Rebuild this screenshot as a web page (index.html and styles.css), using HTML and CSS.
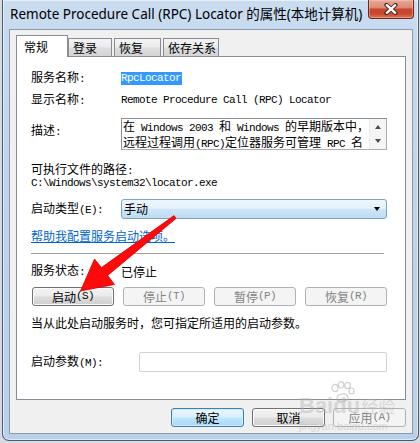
FILE: index.html
```html
<!DOCTYPE html>
<html lang="zh-CN">
<head>
<meta charset="utf-8">
<title>Remote Procedure Call (RPC) Locator 的属性(本地计算机)</title>
<link rel="stylesheet" href="styles.css">
</head>
<body>
<div class="window">
  <div class="titlebar">
    <span class="title">Remote Procedure Call (RPC) Locator 的属性(本地计算机)</span>
    <div class="close">
      <svg width="14" height="12" viewBox="0 0 14 12">
        <path d="M2.5 2 L11.5 10 M11.5 2 L2.5 10" stroke="#4a2620" stroke-width="4.2" stroke-linecap="round"/>
        <path d="M2.8 2.2 L11.2 9.8 M11.2 2.2 L2.8 9.8" stroke="#ffffff" stroke-width="2.4" stroke-linecap="round"/>
      </svg>
    </div>
  </div>
  <div class="client">
    <div class="tabs">
      <div class="tab active">常规</div>
      <div class="tab t2">登录</div>
      <div class="tab t3">恢复</div>
      <div class="tab t4">依存关系</div>
    </div>
    <div class="panel">
      <div class="row row-name">
        <span class="label">服务名称<span class="m">:</span></span>
        <span class="m selected">RpcLocator</span>
      </div>
      <div class="row row-display">
        <span class="label">显示名称<span class="m">:</span></span>
        <span class="m">Remote Procedure Call (RPC) Locator</span>
      </div>
      <div class="row row-desc">
        <span class="label label-desc">描述<span class="m">:</span></span>
        <div class="textarea">
          <div class="ta-text">在<span class="m"> Windows 2003 </span>和<span class="m"> Windows </span>的早期版本中，<br>远程过程调用<span class="m">(RPC)</span>定位器服务可管理<span class="m"> RPC </span>名</div>
          <div class="scrollbar">
            <span class="sb-up"></span>
            <span class="sb-down"></span>
          </div>
        </div>
      </div>
      <div class="line exe-label">可执行文件的路径<span class="m">:</span></div>
      <div class="line exe-path m">C:\Windows\system32\locator.exe</div>
      <div class="row row-type">
        <span class="label">启动类型<span class="m">(E):</span></span>
        <div class="combo">
          <span class="combo-text">手动</span>
          <span class="combo-arrow"></span>
        </div>
      </div>
      <div class="line link-line"><span class="link">帮助我配置服务启动选项。</span></div>
      <div class="separator"></div>
      <div class="row row-status">
        <span class="label">服务状态<span class="m">:</span></span>
        <span>已停止</span>
      </div>
      <div class="svc-buttons">
        <div class="btn">启动<span class="m">(S)</span></div>
        <div class="btn disabled">停止<span class="m">(T)</span></div>
        <div class="btn disabled">暂停<span class="m">(P)</span></div>
        <div class="btn disabled">恢复<span class="m">(R)</span></div>
      </div>
      <div class="line note">当从此处启动服务时，您可指定所适用的启动参数。</div>
      <div class="row row-params">
        <span class="label label-params">启动参数<span class="m">(M):</span></span>
        <div class="input"></div>
      </div>
    </div>
    <div class="footer">
      <div class="btn wide default">确定</div>
      <div class="btn wide">取消</div>
      <div class="btn wide disabled">应用<span class="m">(A)</span></div>
    </div>
  </div>
</div>

<svg class="arrow" width="420" height="443" viewBox="0 0 420 443">
  <polygon points="176,218.4 107.7,275.4 114.5,284.5 80.5,291 94.5,259 101.5,267.6 174,215.6" fill="#ff0a0a" stroke="#d80000" stroke-width="0.8" stroke-linejoin="round"/>
</svg>

<div class="watermark">
  <div class="wm-logo"><span class="wm-bai">Bai</span><span class="wm-paw">
    <svg width="26" height="22" viewBox="0 0 26 22">
      <g fill="none" stroke="rgba(170,170,170,0.55)" stroke-width="1.2">
        <ellipse cx="6" cy="7" rx="3" ry="3.6"/>
        <ellipse cx="12" cy="3.8" rx="2.8" ry="3.2"/>
        <ellipse cx="18.5" cy="4.5" rx="2.8" ry="3.2"/>
        <ellipse cx="22.5" cy="10" rx="2.6" ry="3"/>
        <path d="M8 18 C8 12 18 11 19 17 C19.5 21 9 21.5 8 18 Z"/>
      </g>
    </svg></span><span class="wm-du">du</span><span class="wm-jy">经验</span></div>
  <div class="wm-url">jingyan.baidu.com</div>
</div>
</body>
</html>
```
FILE: styles.css
```css
* {
  box-sizing: border-box;
}

html,
body {
  margin: 0;
  padding: 0;
}

body {
  width: 420px;
  height: 443px;
  overflow: hidden;
  position: relative;
  background: #d5dbe2;
  font-family: "Noto Sans CJK SC", sans-serif;
  font-size: 12px;
  color: #000;
}

.m {
  font-family: "Liberation Mono", "Noto Sans CJK SC", monospace;
  font-size: 11px;
  letter-spacing: -0.6px;
}

/* window frame */
.window {
  margin-left: 2px;
  width: 417px;
  height: 441px;
  border: 1px solid #4b5b6e;
  border-top: none;
  border-radius: 0 0 7px 7px;
  background: linear-gradient(180deg, #c9dcf0 0%, #bed4ec 40%, #b9d0ea 100%);
  box-shadow: inset 0 0 0 1px rgba(255, 255, 255, 0.55);
}

.titlebar {
  display: flex;
  align-items: flex-start;
  height: 29px;
  padding-left: 7px;
}

.title {
  line-height: 29px;
  font-family: "Noto Sans", "Noto Sans CJK SC", sans-serif;
  font-size: 13.5px;
  color: #000;
  white-space: nowrap;
}

.close {
  margin-left: auto;
  margin-right: 4px;
  width: 46px;
  height: 19px;
  border: 1px solid #6c2a1f;
  border-top: none;
  border-radius: 0 0 4px 4px;
  background: linear-gradient(180deg, #e9a797 0%, #dc8a73 42%, #c8452c 52%, #c9482f 78%, #df7556 100%);
  box-shadow: inset 0 0 0 1px rgba(255, 220, 210, 0.35);
  display: flex;
  align-items: center;
  justify-content: center;
}

/* client area */
.client {
  margin-left: 6px;
  width: 404px;
  border: 1px solid #8d9aa9;
  background: #f0f0f0;
  padding: 5px 6px 6px 6px;
}

.tabs {
  display: flex;
  align-items: flex-end;
  height: 21px;
}

.tab {
  height: 18px;
  border: 1px solid #898c95;
  border-bottom: none;
  background: linear-gradient(180deg, #f4f4f4 0%, #ebebeb 45%, #dddddd 55%, #d4d4d4 100%);
  line-height: 18px;
  padding-left: 4px;
  white-space: nowrap;
}

.tab.active {
  position: relative;
  z-index: 1;
  width: 52px;
  height: 22px;
  margin-bottom: -1px;
  background: #fff;
  line-height: 21px;
  padding-left: 7px;
}

.tab.t2 {
  width: 44px;
}

.tab.t3 {
  width: 47px;
  margin-left: 2px;
}

.tab.t4 {
  width: 56px;
  margin-left: 2px;
}

.panel {
  width: 390px;
  height: 344px;
  border: 1px solid #898c95;
  background: #fff;
  padding: 0 18px 0 14px;
}

.row {
  display: flex;
  align-items: center;
  height: 16px;
  white-space: nowrap;
}

.label {
  width: 90px;
  flex: none;
  line-height: 16px;
}

.line {
  height: 14px;
  line-height: 14px;
  white-space: nowrap;
}

.row-name {
  margin-top: 13px;
}

.selected {
  background: #3399ff;
  color: #fff;
  line-height: 13px;
  padding-right: 1px;
}

.row-display {
  margin-top: 6px;
}

.row-desc {
  margin-top: 10px;
  height: 32px;
  align-items: flex-start;
}

.label-desc {
  margin-top: 4px;
}

.textarea {
  width: 266px;
  height: 32px;
  border: 1px solid #abadb3;
  border-left-color: #8c8e94;
  border-top-color: #8c8e94;
  display: flex;
  background: #fff;
}

.ta-text {
  flex: 1;
  padding-left: 1px;
  line-height: 13px;
  padding-top: 0;
  letter-spacing: 0;
}

.scrollbar {
  width: 17px;
  flex: none;
  background: #f5f5f5;
  border-left: 1px solid #ececec;
  position: relative;
  display: flex;
  flex-direction: column;
  align-items: center;
  justify-content: space-between;
  padding: 6px 0 6px;
}

.sb-up {
  width: 0;
  height: 0;
  border-left: 3.5px solid transparent;
  border-right: 3.5px solid transparent;
  border-bottom: 4px solid #4d4d4d;
}

.sb-down {
  width: 0;
  height: 0;
  border-left: 3.5px solid transparent;
  border-right: 3.5px solid transparent;
  border-top: 4px solid #4d4d4d;
}

.exe-label {
  margin-top: 12px;
}

.row-type {
  margin-top: 9px;
  height: 20px;
}

.combo {
  width: 266px;
  height: 20px;
  border: 1px solid #7aa3c8;
  border-radius: 3px;
  background: linear-gradient(180deg, #eef6fd 0%, #e2f0fb 48%, #cde5f7 52%, #bedcf2 100%);
  display: flex;
  align-items: center;
  padding-left: 2px;
  padding-right: 6px;
}

.combo-text {
  flex: 1;
  line-height: 18px;
}

.combo-arrow {
  width: 0;
  height: 0;
  border-left: 3.5px solid transparent;
  border-right: 3.5px solid transparent;
  border-top: 4px solid #000;
}

.link-line {
  margin-top: 9px;
  height: 16px;
  line-height: 16px;
}

.link {
  color: #0066cc;
  text-decoration: underline;
}

.separator {
  margin-top: 9px;
  width: 353px;
  height: 1px;
  background: #a0a0a0;
}

.row-status {
  margin-top: 9px;
}

.svc-buttons {
  margin-top: 8px;
  padding-left: 1px;
  display: flex;
  justify-content: space-between;
}

.btn {
  width: 82px;
  height: 19px;
  border: 1px solid #707070;
  border-radius: 3px;
  background: linear-gradient(180deg, #f2f2f2 0%, #ebebeb 48%, #dddddd 52%, #cfcfcf 100%);
  box-shadow: inset 0 0 0 1px #fbfbfb;
  display: flex;
  align-items: center;
  justify-content: center;
  line-height: 17px;
  white-space: nowrap;
}

.btn.disabled {
  border-color: #adb2b5;
  background: #f4f4f4;
  box-shadow: none;
  color: #838383;
}

.note {
  margin-top: 9px;
  height: 16px;
  line-height: 16px;
}

.row-params {
  margin-top: 21px;
  height: 20px;
}

.label-params {
  width: 108px;
}

.input {
  width: 249px;
  height: 20px;
  border: 1px solid #d0d2d6;
  border-radius: 2px;
  background: #fff;
}

/* bottom buttons */
.footer {
  margin-top: 8px;
  display: flex;
  justify-content: flex-end;
  gap: 8px;
}

.btn.wide {
  width: 73px;
}

.btn.default {
  border-color: #3c7fb1;
  background: linear-gradient(180deg, #eaf6fd 0%, #d9f0fc 48%, #bee6fd 52%, #a7d9f5 100%);
  box-shadow: inset 0 0 0 1px #d2ecfb;
}

/* annotation overlay */
.arrow {
  position: absolute;
  left: 0;
  top: 0;
  pointer-events: none;
}

.watermark {
  position: absolute;
  left: 299px;
  top: 394px;
  width: 110px;
  color: rgba(175, 175, 175, 0.42);
  pointer-events: none;
  white-space: nowrap;
}

.wm-logo {
  height: 24px;
  line-height: 24px;
}

.wm-bai,
.wm-du {
  font-family: "Liberation Sans", sans-serif;
  font-weight: bold;
  font-size: 22px;
  vertical-align: bottom;
}

.wm-paw {
  display: inline-block;
  width: 0;
  position: relative;
  vertical-align: bottom;
}

.wm-paw svg {
  position: absolute;
  left: -4px;
  bottom: 15px;
}

.wm-jy {
  font-size: 17px;
  margin-left: 1px;
  vertical-align: bottom;
}

.wm-url {
  font-family: "Liberation Sans", sans-serif;
  font-size: 11px;
  line-height: 12px;
  margin-top: 2px;
}
```
